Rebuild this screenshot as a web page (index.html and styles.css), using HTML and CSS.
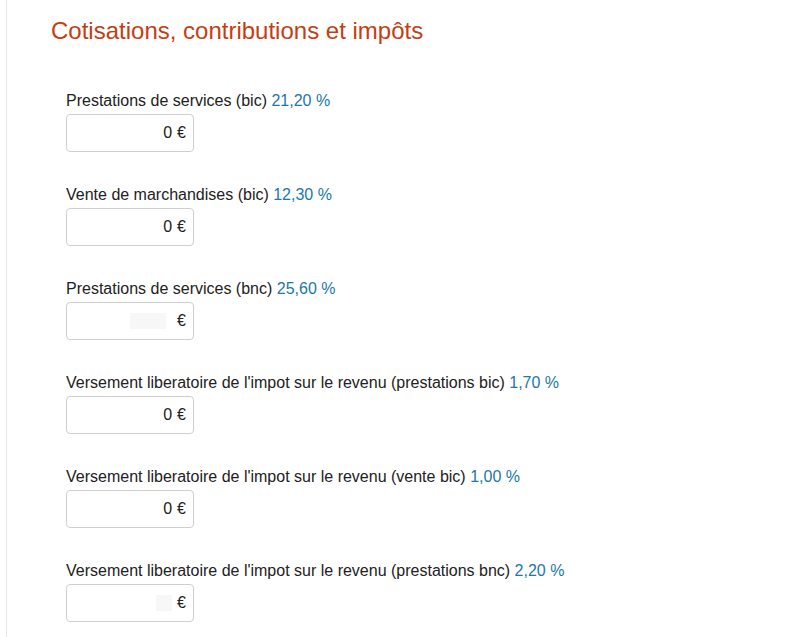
FILE: index.html
```html
<!DOCTYPE html>
<html lang="fr">
<head>
    <meta charset="UTF-8">
    <title>Cotisations, contributions et impôts</title>
    <link rel="stylesheet" href="styles.css">
</head>
<body>
    <div class="page">
        <h2 class="title">Cotisations, contributions et impôts</h2>

        <div class="fields">
            <div class="field">
                <label>Prestations de services (bic) <span class="rate">21,20 %</span></label>
                <div class="amount"><span>0</span> €</div>
            </div>
            <div class="field">
                <label>Vente de marchandises (bic) <span class="rate">12,30 %</span></label>
                <div class="amount"><span>0</span> €</div>
            </div>
            <div class="field">
                <label>Prestations de services (bnc) <span class="rate">25,60 %</span></label>
                <div class="amount"><span class="blank wide"></span> €</div>
            </div>
            <div class="field">
                <label>Versement liberatoire de l'impot sur le revenu (prestations bic) <span class="rate">1,70 %</span></label>
                <div class="amount"><span>0</span> €</div>
            </div>
            <div class="field">
                <label>Versement liberatoire de l'impot sur le revenu (vente bic) <span class="rate">1,00 %</span></label>
                <div class="amount"><span>0</span> €</div>
            </div>
            <div class="field">
                <label>Versement liberatoire de l'impot sur le revenu (prestations bnc) <span class="rate">2,20 %</span></label>
                <div class="amount"><span class="blank"></span> €</div>
            </div>
        </div>
    </div>
</body>
</html>
```

FILE: styles.css
```css
body {
    margin: 0;
    font-family: "Liberation Sans", Arial, sans-serif;
    background: white;
    color: #222;
}
.page {
    margin-left: 6px;
    border-left: 1px solid #ebebeb;
    padding: 17px 0 0 44px;
    min-height: 637px;
    box-sizing: border-box;
}
.title {
    margin: 0;
    font-size: 24px;
    line-height: 28px;
    font-weight: normal;
    color: #c63d12;
}
.fields {
    padding: 46px 0 0 15px;
    display: flex;
    flex-direction: column;
    gap: 33px;
}
.field label {
    display: block;
    font-size: 16px;
    line-height: 20px;
    margin-bottom: 3px;
}
.rate { color: #2277a8; }
.amount {
    width: 128px;
    height: 38px;
    box-sizing: border-box;
    border: 1px solid #cfcfcf;
    border-radius: 4px;
    display: flex;
    align-items: center;
    justify-content: flex-end;
    gap: 5px;
    padding-right: 7px;
    font-size: 16px;
}
.blank {
    display: inline-block;
    width: 16px;
    height: 16px;
    background: #f7f7f7;
}
.blank.wide { width: 36px; margin-right: 6px; }
```
